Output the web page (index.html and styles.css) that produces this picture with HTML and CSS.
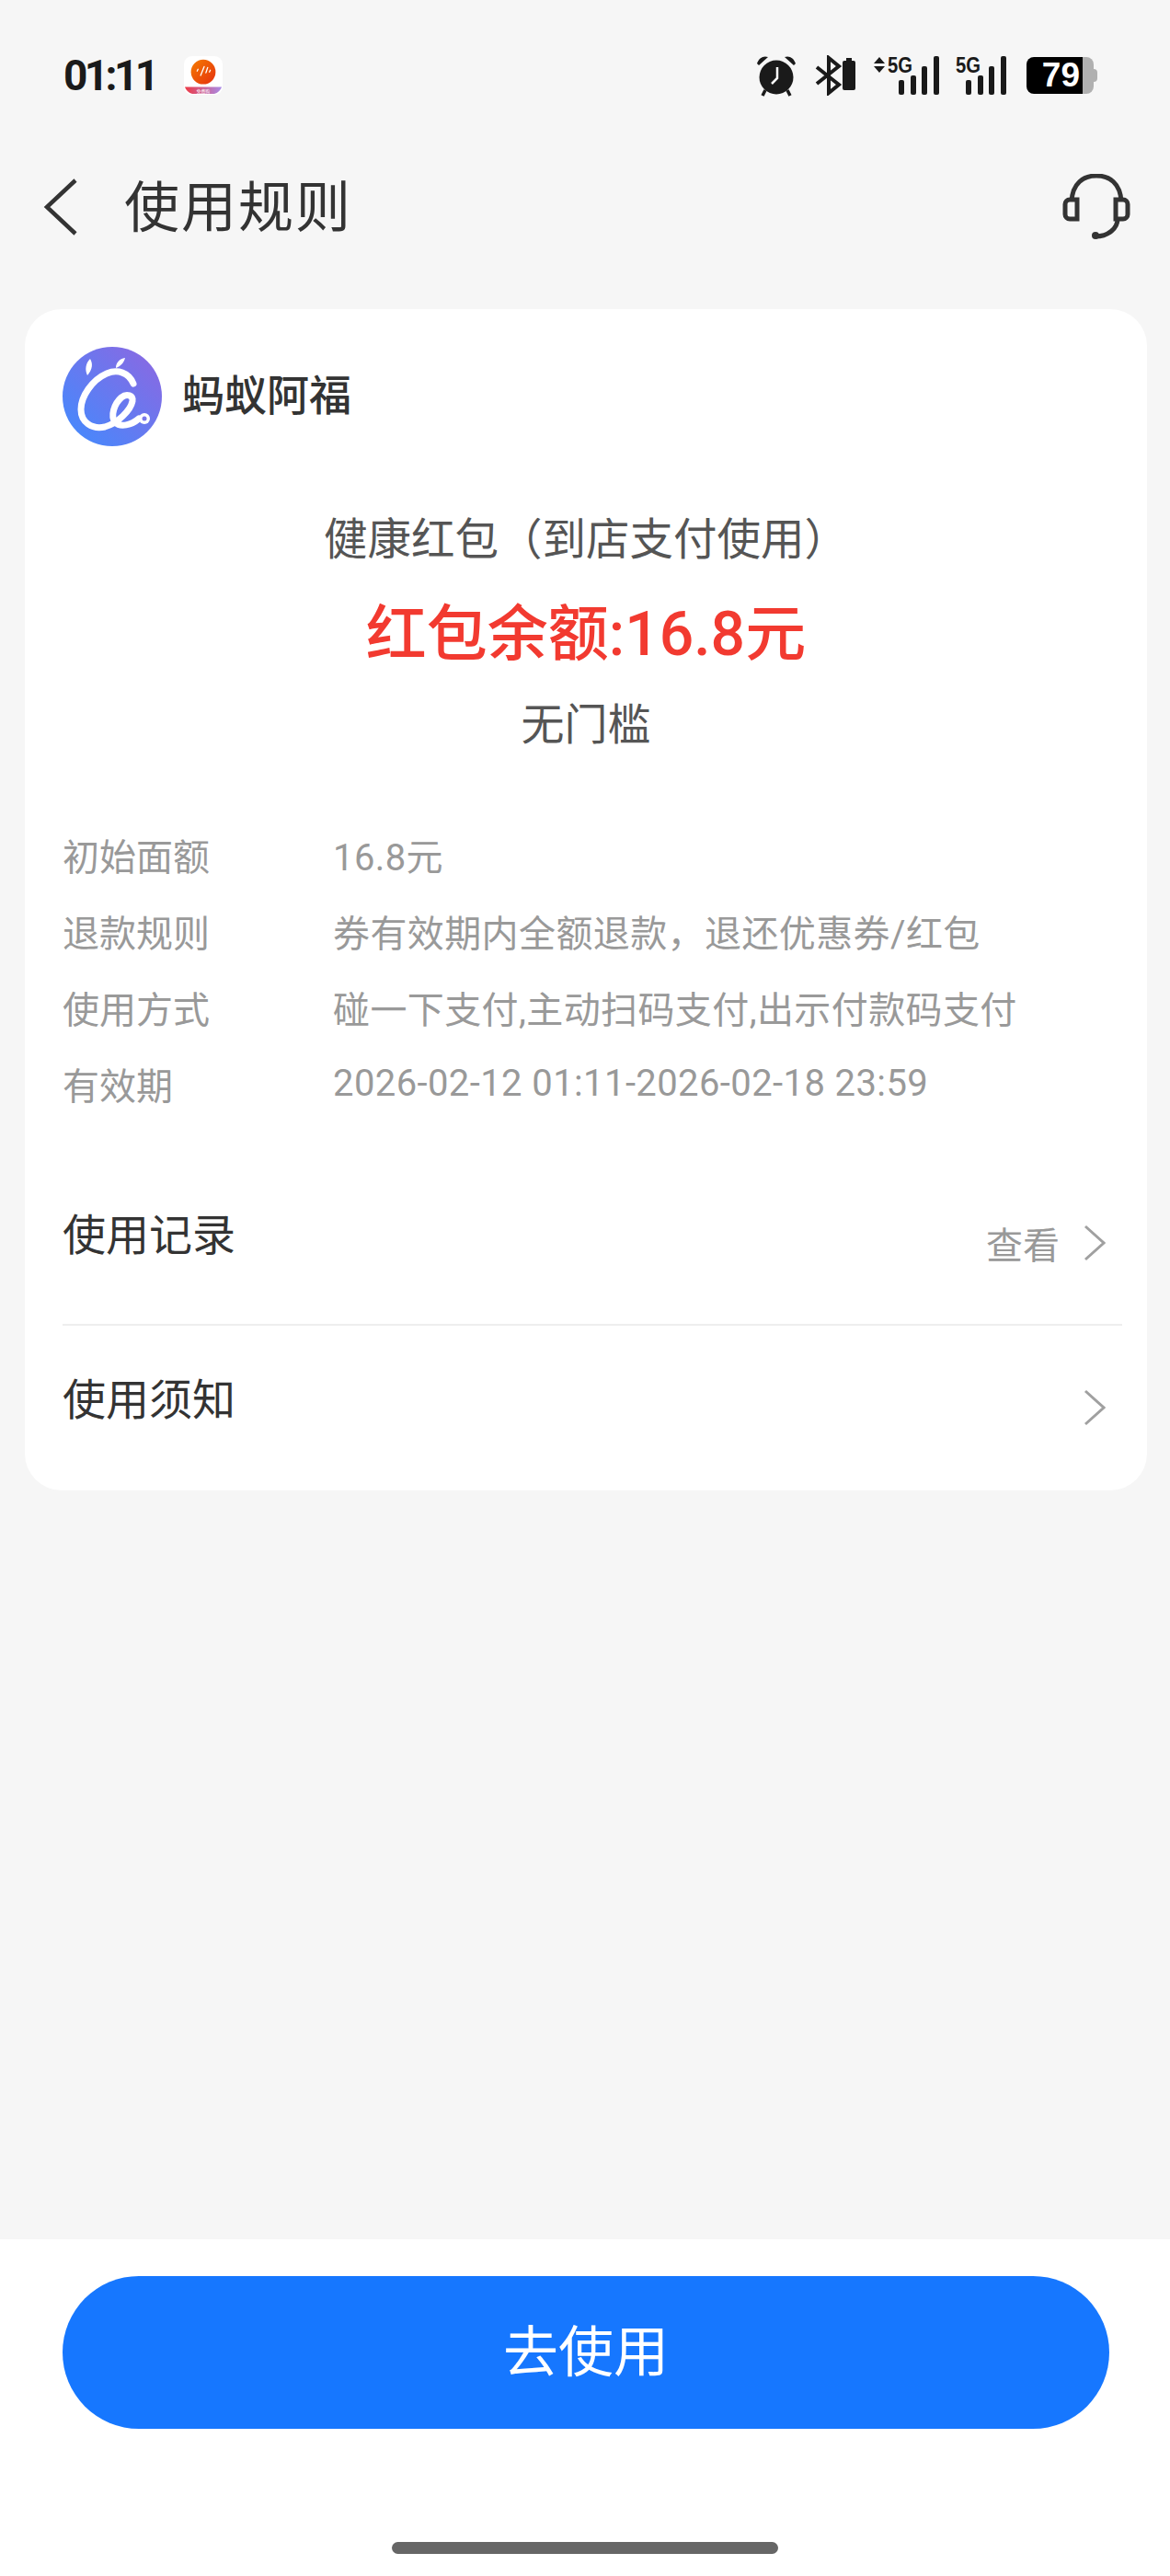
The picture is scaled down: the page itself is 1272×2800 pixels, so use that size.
FILE: index.html
```html
<!DOCTYPE html>
<html lang="zh-CN">
<head>
    <meta charset="UTF-8">
    <meta name="viewport" content="width=device-width, initial-scale=1.0">
    <title>使用规则</title>
    <link rel="stylesheet" href="styles.css">
</head>
<body>
    <div class="page">
        <div class="status-bar">
            <div class="status-left">
                <span class="clock">01:11</span>
                <svg class="app-icon" width="42" height="42" viewBox="0 0 44 44">
                    <defs>
                        <linearGradient id="appBall" x1="0" y1="0" x2="1" y2="1">
                            <stop offset="0" stop-color="#f57c00"/>
                            <stop offset="1" stop-color="#e5300f"/>
                        </linearGradient>
                        <linearGradient id="appBand" x1="0" y1="0" x2="1" y2="0">
                            <stop offset="0" stop-color="#ee3a45"/>
                            <stop offset="1" stop-color="#a98be8"/>
                        </linearGradient>
                    </defs>
                    <rect width="44" height="44" rx="9" fill="#fff"/>
                    <circle cx="22" cy="18" r="14" fill="url(#appBall)"/>
                    <path d="M15 17l1-2M19 22l4-10M25 19l2-6M29 18l1-2" stroke="#fff" stroke-width="1.4" stroke-linecap="round"/>
                    <path d="M1 35h42c-2 5-6 8-10 8H11c-4 0-8-3-10-8z" fill="url(#appBand)"/>
                    <text class="app-badge" x="22" y="41.5">免费购</text>
                </svg>
            </div>
            <div class="status-right">
                <svg class="gap-20" width="44" height="46" viewBox="0 0 44 46">
                    <circle cx="22" cy="25" r="18.5" fill="#1a1a1a"/>
                    <path d="M1 10C3 4 8 1 13 3L3 12zM43 10C41 4 36 1 31 3l10 9z" fill="#1a1a1a"/>
                    <path d="M10 39l-3 6M34 39l3 6" stroke="#1a1a1a" stroke-width="3.5"/>
                    <path d="M23 14v12l-6 6" fill="none" stroke="#fff" stroke-width="2.5"/>
                </svg>
                <svg class="gap-20" width="44" height="44" viewBox="0 0 44 44">
                    <path d="M2 13l24 19-11 9V3l11 9L2 31" fill="none" stroke="#1a1a1a" stroke-width="4"/>
                    <rect x="30" y="6" width="14" height="32" rx="2" fill="#1a1a1a"/>
                    <rect x="34" y="3" width="6" height="4" fill="#1a1a1a"/>
                </svg>
                <svg class="gap-18" width="71" height="52" viewBox="0 -4 71 52">
                    <path d="M0 9l6-7 6 7zM0 12l6 7 6-7z" fill="#1a1a1a"/>
                    <text class="net-label" x="15" y="19" textLength="27" lengthAdjust="spacingAndGlyphs">5G</text>
                    <rect x="27" y="27" width="6" height="16" rx="2" fill="#1a1a1a"/>
                    <rect x="40" y="22" width="6" height="21" rx="2" fill="#1a1a1a"/>
                    <rect x="52" y="12" width="6" height="31" rx="2" fill="#1a1a1a"/>
                    <rect x="65" y="1" width="6" height="42" rx="2" fill="#1a1a1a"/>
                </svg>
                <svg class="gap-21" width="56" height="52" viewBox="0 -4 56 52">
                    <text class="net-label" x="0" y="19" textLength="27" lengthAdjust="spacingAndGlyphs">5G</text>
                    <rect x="11" y="27" width="6" height="16" rx="2" fill="#1a1a1a"/>
                    <rect x="24" y="22" width="6" height="21" rx="2" fill="#1a1a1a"/>
                    <rect x="36" y="12" width="6" height="31" rx="2" fill="#1a1a1a"/>
                    <rect x="49" y="1" width="6" height="42" rx="2" fill="#1a1a1a"/>
                </svg>
                <div class="battery">
                    <div class="battery-level">79</div>
                    <div class="battery-rest"></div>
                    <div class="battery-cap"></div>
                </div>
            </div>
        </div>

        <div class="nav-bar">
            <div class="nav-left">
                <svg class="back" width="38" height="62" viewBox="0 0 38 62">
                    <path d="M35 2L4 31l31 29" fill="none" stroke="#333" stroke-width="4.5"/>
                </svg>
                <h1>使用规则</h1>
            </div>
            <svg class="service" width="76" height="72" viewBox="0 0 76 72">
                <path d="M11 30C12 10 24 2 38 2s26 8 27 28" fill="none" stroke="#333" stroke-width="5"/>
                <path d="M17 28H9a5 5 0 0 0-5 5v11a5 5 0 0 0 5 5h8zM59 28h8a5 5 0 0 1 5 5v11a5 5 0 0 1-5 5h-8z" fill="none" stroke="#333" stroke-width="5"/>
                <path d="M61 49c0 10-10 19-24 19" fill="none" stroke="#333" stroke-width="5"/>
                <circle cx="37" cy="67" r="4" fill="#333"/>
            </svg>
        </div>

        <div class="card">
            <div class="merchant">
                <svg class="logo" width="108" height="108" viewBox="0 0 108 108">
                    <defs>
                        <linearGradient id="logoBg" x1="0" y1="1" x2="1" y2="0">
                            <stop offset="0" stop-color="#3f8cff"/>
                            <stop offset="1" stop-color="#8f66e0"/>
                        </linearGradient>
                    </defs>
                    <circle cx="54" cy="54" r="54" fill="url(#logoBg)"/>
                    <path d="M77 40C72 28 60 24 48 29 32 36 20 54 20 68c0 14 12 22 26 19 14-4 28-18 30-28 1-6-6-9-12-4-8 7-12 20-7 27 6 6 18 3 26-4" fill="none" stroke="#fff" stroke-width="7" stroke-linecap="round"/>
                    <circle cx="89" cy="78" r="6" fill="#fff"/>
                    <circle cx="89" cy="78" r="2.5" fill="#7a78ea"/>
                    <path d="M30 13c3 5 3 11-3 18-3-6-2-13 3-18zM68 12c-1 5-5 9-10 11 0-6 4-10 10-11z" fill="#fff"/>
                </svg>
                <span class="merchant-name">蚂蚁阿福</span>
            </div>

            <div class="summary">
                <div class="summary-title">健康红包（到店支付使用）</div>
                <div class="summary-amount">红包余额:16.8元</div>
                <div class="summary-note">无门槛</div>
            </div>

            <div class="rules">
                <div class="rule"><span class="rule-label">初始面额</span><span class="rule-value">16.8元</span></div>
                <div class="rule"><span class="rule-label">退款规则</span><span class="rule-value">券有效期内全额退款，退还优惠券/红包</span></div>
                <div class="rule"><span class="rule-label">使用方式</span><span class="rule-value">碰一下支付,主动扫码支付,出示付款码支付</span></div>
                <div class="rule"><span class="rule-label">有效期</span><span class="rule-value">2026-02-12 01:11-2026-02-18 23:59</span></div>
            </div>

            <div class="link-row first">
                <span class="link-title">使用记录</span>
                <span class="link-more">查看</span>
                <svg class="chevron" width="24" height="40" viewBox="0 0 24 40">
                    <path d="M2 2l20 18L2 38" fill="none" stroke="#a0a0a0" stroke-width="3"/>
                </svg>
            </div>
            <div class="link-row">
                <span class="link-title">使用须知</span>
                <svg class="chevron" width="24" height="40" viewBox="0 0 24 40">
                    <path d="M2 2l20 18L2 38" fill="none" stroke="#a0a0a0" stroke-width="3"/>
                </svg>
            </div>
        </div>

        <div class="footer">
            <button class="use-btn">去使用</button>
            <div class="home-bar"></div>
        </div>
    </div>
</body>
</html>
```

FILE: styles.css
```css
body {
    margin: 0;
    background-color: #f6f6f6;
    color: #333;
    font-family: 'Roboto', 'Noto Sans CJK SC', sans-serif;
}

.page {
    width: 1272px;
    height: 2800px;
    display: flex;
    flex-direction: column;
}

.status-bar {
    height: 164px;
    padding: 0 79px 0 69px;
    box-sizing: border-box;
    display: flex;
    justify-content: space-between;
    align-items: center;
}

.status-left {
    display: flex;
    align-items: center;
    gap: 30px;
}

.clock {
    font-size: 46px;
    font-weight: 700;
    letter-spacing: -3.6px;
    color: #1a1a1a;
}

.app-badge {
    font-size: 5px;
    fill: #fff;
    text-anchor: middle;
}

.status-right {
    display: flex;
    align-items: center;
}

.gap-20 {
    margin-right: 20px;
}

.gap-18 {
    margin-right: 18px;
}

.gap-21 {
    margin-right: 21px;
}

.net-label {
    font-family: 'Liberation Sans', sans-serif;
    font-size: 24px;
    font-weight: 700;
    fill: #1a1a1a;
}

.battery {
    display: flex;
    align-items: center;
    height: 40px;
}

.battery-level {
    width: 58px;
    height: 40px;
    padding-right: 3px;
    background-color: #000;
    border-radius: 8px 0 0 8px;
    color: #fff;
    font-family: 'Liberation Sans', sans-serif;
    font-size: 37px;
    font-weight: 700;
    line-height: 40px;
    text-align: right;
}

.battery-rest {
    width: 12px;
    height: 40px;
    background-color: #b0b0b0;
    border-radius: 0 8px 8px 0;
}

.battery-cap {
    width: 4px;
    height: 14px;
    background-color: #b0b0b0;
    border-radius: 0 4px 4px 0;
}

.nav-bar {
    height: 122px;
    margin-bottom: 50px;
    padding: 0 42px 0 47px;
    display: flex;
    justify-content: space-between;
    align-items: center;
    box-sizing: border-box;
}

.nav-left {
    display: flex;
    align-items: center;
    gap: 50px;
}

h1 {
    margin: -10px 0 0;
    font-size: 60px;
    font-weight: 400;
    letter-spacing: 2px;
}

.card {
    margin: 0 25px 0 27px;
    height: 1284px;
    padding: 41px 27px 0 41px;
    box-sizing: border-box;
    background-color: #fff;
    border-radius: 40px;
}

.merchant {
    display: flex;
    align-items: center;
    gap: 22px;
}

.merchant-name {
    margin-top: -10px;
    font-size: 46px;
    font-weight: 500;
}

.summary {
    margin-top: 72px;
    text-align: center;
    padding-right: 14px;
}

.summary-title {
    font-size: 47.5px;
    line-height: 60px;
    color: #555;
}

.summary-amount {
    margin-top: 33px;
    font-size: 66px;
    font-weight: 500;
    line-height: 80px;
    color: #f23a30;
}

.summary-note {
    margin-top: 28px;
    font-size: 47px;
    line-height: 60px;
    color: #555;
}

.rules {
    margin-top: 69px;
    font-size: 40px;
    color: #999;
}

.rule {
    height: 83px;
    display: flex;
    align-items: center;
}

.rule-label {
    width: 294px;
}

.rule-value {
    letter-spacing: 0.4px;
}

.link-row {
    height: 178px;
    display: flex;
    align-items: center;
    border-bottom: 2px solid #eee;
    box-sizing: border-box;
    padding-right: 18px;
}

.link-row.first {
    height: 190px;
    margin-top: 32px;
    padding-top: 12px;
}

.link-row:last-child {
    border-bottom: none;
}

.link-title {
    flex: 1;
    font-size: 47px;
    margin-top: -26px;
}

.link-more {
    font-size: 40px;
    color: #999;
    margin-right: 26px;
}

.footer {
    margin-top: auto;
    height: 366px;
    background-color: #fff;
    display: flex;
    flex-direction: column;
    align-items: center;
}

.use-btn {
    margin: 40px 66px 0 68px;
    width: 1138px;
    height: 166px;
    padding: 0 0 12px;
    border: none;
    border-radius: 83px;
    background-color: #1677ff;
    color: #fff;
    font-family: inherit;
    font-size: 60px;
}

.home-bar {
    margin-top: 123px;
    width: 420px;
    height: 13px;
    border-radius: 7px;
    background-color: #666;
}
```
